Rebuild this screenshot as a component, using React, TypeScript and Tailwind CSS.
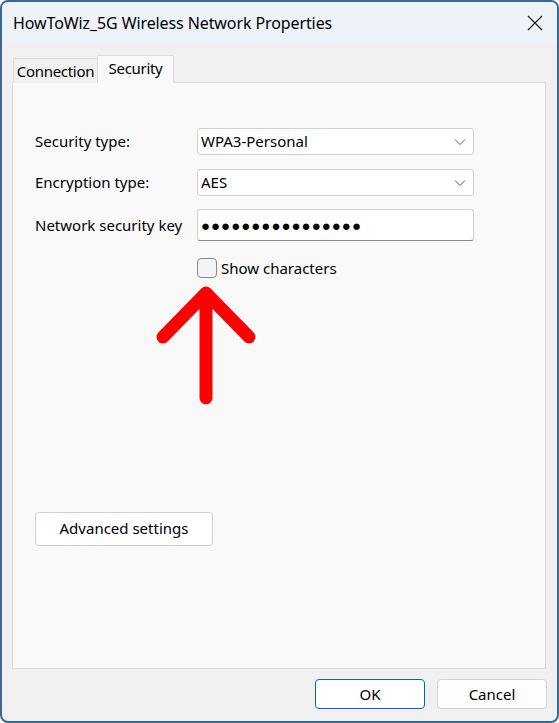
import React from "react";

const font = { fontFamily: '"Noto Sans", "Open Sans", Arial, sans-serif' };

function Chevron() {
  return (
    <svg width="12" height="8" viewBox="0 0 12 8" className="text-[#5a5a5a]">
      <path d="M1 1.5 L6 6.5 L11 1.5" fill="none" stroke="currentColor" strokeWidth="1" />
    </svg>
  );
}

function Combo({ value }: { value: string }) {
  return (
    <div className="flex h-[27px] w-[277px] items-center justify-between rounded-[3px] border border-[#d0d0d0] bg-white pl-[3px] pr-[7px] text-[15px] text-black">
      <span>{value}</span>
      <Chevron />
    </div>
  );
}

function Row({ label, children }: { label: string; children: React.ReactNode }) {
  return (
    <div className="flex items-center">
      <div className="w-[162px] text-[15px] text-black">{label}</div>
      {children}
    </div>
  );
}

function Arrow() {
  return (
    <svg width="110" height="130" viewBox="0 0 110 130" className="block">
      <g fill="none" strokeLinecap="round" strokeLinejoin="round">
        <path d="M55 113 L55 8 M12 52 L55 8 L98 52" stroke="white" strokeWidth="17" />
        <path d="M55 113 L55 8 M12 52 L55 8 L98 52" stroke="#ff0000" strokeWidth="13" />
      </g>
    </svg>
  );
}

export default function App() {
  return (
    <div className="h-[723px] w-[559px] bg-white" style={font}>
      <div className="flex h-full w-full flex-col overflow-hidden rounded-[8px] border-2 border-[#3b6791] bg-[#f0f0f0]">
        <div className="flex h-[42px] shrink-0 items-center justify-between bg-[#eef3fa] pl-[11px] pr-[14px]">
          <span className="text-[16px] tracking-[-0.1px] text-black">HowToWiz_5G Wireless Network Properties</span>
          <svg width="16" height="16" viewBox="0 0 16 16">
            <path d="M1 1 L15 15 M15 1 L1 15" stroke="#1a1a1a" strokeWidth="1.2" />
          </svg>
        </div>

        <div className="flex flex-1 flex-col px-[10px] pt-[11px]">
          <div className="relative z-10 flex items-end pl-[1px]">
            <div className="-mb-px flex h-[25px] w-[85px] items-center justify-center border border-b-0 border-[#dcdcdc] bg-[#f0f0f0] text-[15px] tracking-[-0.3px] text-black">
              Connection
            </div>
            <div className="-mb-px -ml-px flex h-[28px] w-[77px] items-center justify-center border border-b-0 border-[#dcdcdc] bg-[#f9f9f9] pb-[3px] text-[15px] tracking-[-0.3px] text-black">
              Security
            </div>
          </div>
          <div className="flex h-[587px] w-[534px] flex-col border border-[#dcdcdc] bg-[#f9f9f9] pl-[22px] pt-[45px]">
            <div className="flex flex-col gap-[14px]">
              <Row label="Security type:">
                <Combo value="WPA3-Personal" />
              </Row>
              <Row label="Encryption type:">
                <Combo value="AES" />
              </Row>
              <div className="-mt-px">
                <Row label="Network security key">
                  <div className="flex h-[32px] w-[277px] items-center rounded-[3px] border border-[#d0d0d0] border-b-[#8a8a8a] bg-white pl-[3px] text-[15px] tracking-[1px] text-black">
                    ●●●●●●●●●●●●●●●●
                  </div>
                </Row>
              </div>
            </div>
            <div className="ml-[162px] mt-[16px] flex items-center gap-[4px]">
              <div className="h-[20px] w-[20px] rounded-[4px] border border-[#8a8a8a] bg-[#f3f3f3]" />
              <span className="text-[15px] text-black">Show characters</span>
            </div>
            <div className="ml-[116px] mt-[5px]">
              <Arrow />
            </div>
            <div className="mt-[97px]">
              <button className="h-[34px] w-[178px] rounded-[4px] border border-[#d0d0d0] bg-white text-[15px] text-black">
                Advanced settings
              </button>
            </div>
          </div>
          <div className="mt-[10px] flex justify-end gap-[12px]">
            <button className="h-[30px] w-[110px] rounded-[4px] border border-[#0067c0] bg-white text-[15px] text-black">
              OK
            </button>
            <button className="h-[30px] w-[110px] rounded-[4px] border border-[#d0d0d0] bg-[#fdfdfd] text-[15px] text-black">
              Cancel
            </button>
          </div>
        </div>
      </div>
    </div>
  );
}
